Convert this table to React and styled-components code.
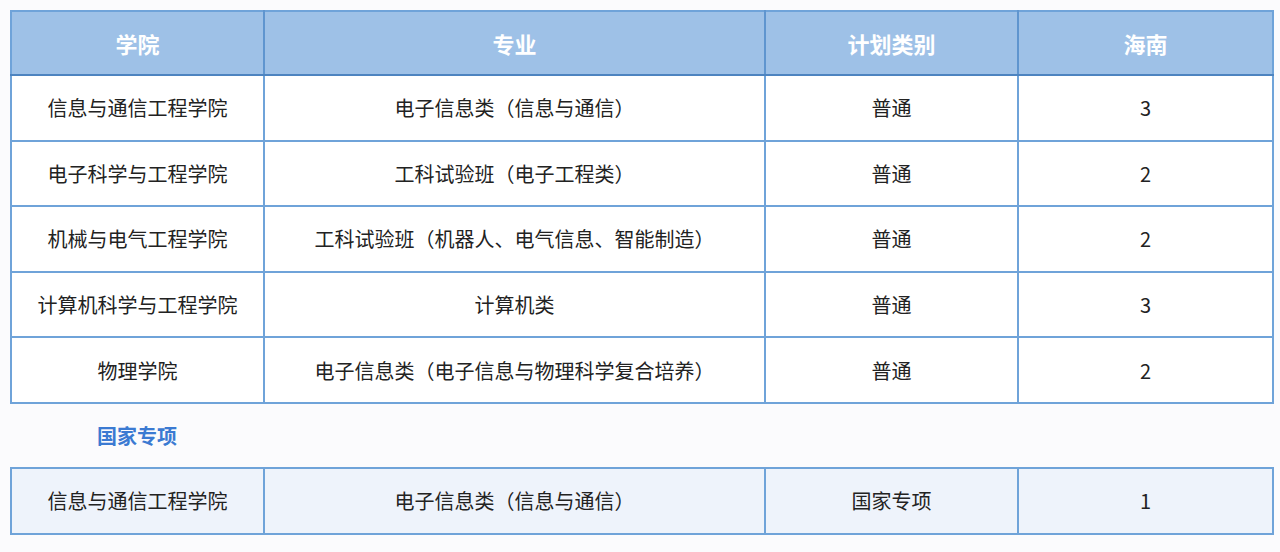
import React from 'react'
import styled, { createGlobalStyle } from 'styled-components'

const GlobalStyle = createGlobalStyle`
  body {
    margin: 0;
    background: #fbfbfd;
    font-family: "Noto Sans CJK SC", "Liberation Sans", sans-serif;
  }
`

const Page = styled.div`
  width: 1280px;
  height: 552px;
  padding: 10px 8px 0 10px;
  box-sizing: border-box;
  overflow: hidden;
`

const Table = styled.table`
  width: 1262px;
  border-collapse: collapse;
  table-layout: fixed;
  border: 2px solid #6fa3d9;
`

const HeadCell = styled.th`
  height: 62px;
  padding: 0;
  background: #9ec1e7;
  color: #ffffff;
  font-size: 22px;
  font-weight: 700;
  border-left: 2px solid #5f95cf;
  border-bottom: 2px solid #4d84c0;
  &:first-child {
    border-left: none;
  }
`

const Cell = styled.td`
  height: 63.6px;
  padding: 0;
  text-align: center;
  font-size: 20px;
  color: #222;
  background: ${(p) => (p.$tint ? '#eef3fb' : '#ffffff')};
  border: 2px solid #6fa3d9;
`

const SectionTitle = styled.div`
  height: 63px;
  display: flex;
  align-items: center;
  padding-left: 87px;
  color: #3b7ad2;
  font-size: 20px;
  font-weight: 700;
`

const rows = [
  ['信息与通信工程学院', '电子信息类（信息与通信）', '普通', '3'],
  ['电子科学与工程学院', '工科试验班（电子工程类）', '普通', '2'],
  ['机械与电气工程学院', '工科试验班（机器人、电气信息、智能制造）', '普通', '2'],
  ['计算机科学与工程学院', '计算机类', '普通', '3'],
  ['物理学院', '电子信息类（电子信息与物理科学复合培养）', '普通', '2'],
]

const special = [['信息与通信工程学院', '电子信息类（信息与通信）', '国家专项', '1']]

function Cols() {
  return (
    <colgroup>
      <col style={{ width: 253 }} />
      <col style={{ width: 501 }} />
      <col style={{ width: 253 }} />
      <col style={{ width: 255 }} />
    </colgroup>
  )
}

export default function App() {
  return (
    <Page>
      <GlobalStyle />
      <Table>
        <Cols />
        <thead>
          <tr>
            <HeadCell>学院</HeadCell>
            <HeadCell>专业</HeadCell>
            <HeadCell>计划类别</HeadCell>
            <HeadCell>海南</HeadCell>
          </tr>
        </thead>
        <tbody>
          {rows.map((r, i) => (
            <tr key={i}>
              {r.map((c, j) => (
                <Cell key={j}>{c}</Cell>
              ))}
            </tr>
          ))}
        </tbody>
      </Table>
      <SectionTitle>国家专项</SectionTitle>
      <Table>
        <Cols />
        <tbody>
          {special.map((r, i) => (
            <tr key={i}>
              {r.map((c, j) => (
                <Cell key={j} $tint>
                  {c}
                </Cell>
              ))}
            </tr>
          ))}
        </tbody>
      </Table>
    </Page>
  )
}
